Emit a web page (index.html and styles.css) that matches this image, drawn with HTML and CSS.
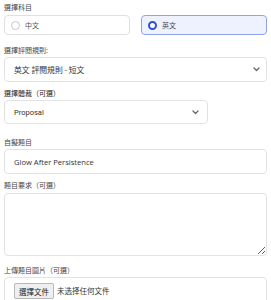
FILE: index.html
```html
<!DOCTYPE html>
<html lang="zh-Hant">
<head>
<meta charset="utf-8">
<link rel="stylesheet" href="styles.css">
</head>
<body>
<div class="form">
  <div class="group g1">
    <div class="label">選擇科目</div>
    <div class="radios">
      <div class="radio"><span class="dot"></span><span class="rtext">中文</span></div>
      <div class="radio on"><span class="dot"></span><span class="rtext">英文</span></div>
    </div>
  </div>
  <div class="group g2">
    <div class="label">選擇評閱規則:</div>
    <div class="select full cjk">
      <span>英文 評閱規則 - 短文</span>
      <svg class="chev" width="7" height="5" viewBox="0 0 7 5"><path d="M1 1l2.5 2.5L6 1" fill="none" stroke="#666" stroke-width="1.3" stroke-linecap="round" stroke-linejoin="round"/></svg>
    </div>
  </div>
  <div class="group g3">
    <div class="label dark">選擇體裁（可選）</div>
    <div class="select short">
      <span>Proposal</span>
      <svg class="chev" width="7" height="5" viewBox="0 0 7 5"><path d="M1 1l2.5 2.5L6 1" fill="none" stroke="#666" stroke-width="1.3" stroke-linecap="round" stroke-linejoin="round"/></svg>
    </div>
  </div>
  <div class="group g4">
    <div class="label">自擬題目</div>
    <div class="input">Glow After Persistence</div>
  </div>
  <div class="group g5">
    <div class="label">題目要求（可選）</div>
    <textarea class="area"></textarea>
  </div>
  <div class="group g6">
    <div class="label">上傳題目圖片（可選）</div>
    <div class="file"><span class="fbtn">選擇文件</span><span class="ftext">未选择任何文件</span></div>
  </div>
</div>
</body>
</html>
```
FILE: styles.css
```css
html, body { margin: 0; padding: 0; background: #fff; }
body {
  font-family: "Noto Sans CJK TC", "Noto Sans", sans-serif;
  color: #333;
  overflow: hidden;
}
.form { padding: 2px 4px 0 4px; width: 263px; }
.group { display: flex; flex-direction: column; }
.label { font-size: 7px; line-height: 10px; height: 10px; color: #444; margin-bottom: 2px; }
.label.dark { color: #222; }
.g1 .label { margin-bottom: 3px; }
.g1 { margin-bottom: 10px; }
.g2 { margin-bottom: 6px; }
.g3 { margin-bottom: 13px; }
.g4 { margin-bottom: 6px; }
.g5 { margin-bottom: 9px; }
.g5 .label { margin-bottom: 3px; }
.radios { display: flex; gap: 11px; }
.radio {
  flex: 1; height: 20px; box-sizing: border-box;
  border: 1px solid #e0e0e0; border-radius: 4px;
  display: flex; align-items: center; padding-left: 6px; gap: 5px;
  font-size: 7px; color: #555;
}
.radio.on { background: #eef2ff; border-color: #8ea3ee; color: #444; }
.dot {
  width: 9px; height: 9px; box-sizing: border-box; border-radius: 50%;
  border: 1px solid #c8c8c8; background: #fff;
}
.radio.on .dot { border: 2.7px solid #2f4fd8; }
.select {
  box-sizing: border-box; border: 1px solid #e2e2e2; border-radius: 4px;
  display: flex; align-items: center; justify-content: space-between;
  padding: 0 6px 0 9px; font-size: 7.5px; color: #333;
  font-family: "Roboto", "Noto Sans CJK TC", sans-serif;
}
.select.cjk { font-size: 7.8px; }
.select.full { height: 25px; }
.select.short { height: 24px; width: 204px; padding-right: 8px; }
.chev { display: block; }
.input {
  box-sizing: border-box; height: 25px; border: 1px solid #e2e2e2; border-radius: 4px;
  display: flex; align-items: center; padding-left: 9px; font-size: 7.6px; color: #333;
  font-family: "Open Sans", sans-serif;
}
.area {
  box-sizing: border-box; height: 63px; width: 100%; margin: 0; display: block;
  border: 1px solid #e2e2e2; border-radius: 4px; resize: vertical; background: #fff;
}
.file {
  box-sizing: border-box; height: 28px; border: 1px solid #e2e2e2; border-radius: 4px;
  display: flex; align-items: flex-start; padding: 5px 0 0 9px; gap: 3px;
  font-size: 7.5px; color: #333;
}
.fbtn {
  box-sizing: border-box; height: 16px; width: 40px; padding: 0; display: flex; align-items: center; justify-content: center;
  background: #efefef; border: 1px solid #b8b8b8; border-radius: 2px; color: #222;
}
.ftext { line-height: 16px; color: #333; }
```
